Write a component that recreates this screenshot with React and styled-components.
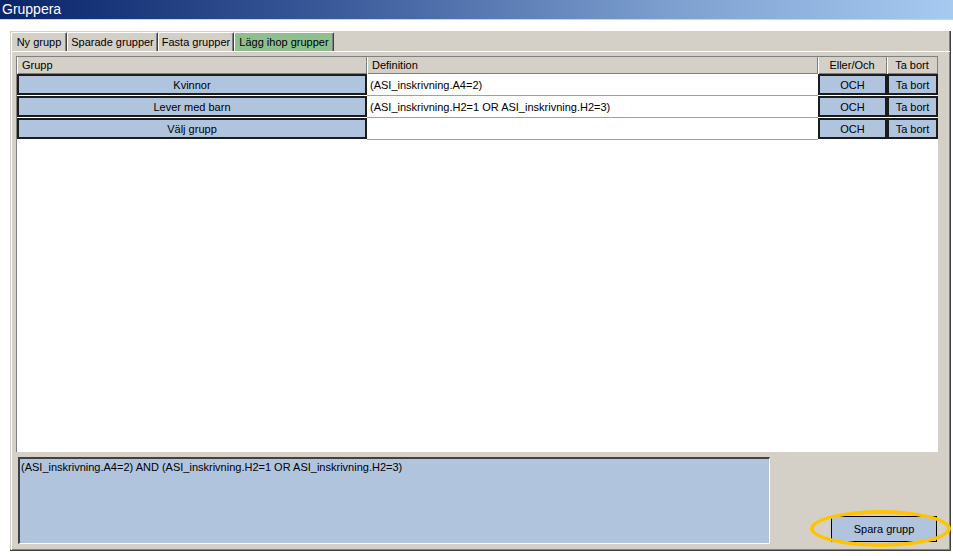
import React from 'react';
import styled, { createGlobalStyle } from 'styled-components';

const GlobalStyle = createGlobalStyle`
  html, body {
    margin: 0;
    padding: 0;
    background: #ffffff;
    font-family: "Liberation Sans", Arial, sans-serif;
    font-size: 11px;
    color: #000;
  }
`;

const COLUMNS = '350px 451px 69px 51px';

const TitleBar = styled.div`
  height: 19px;
  border-bottom: 1px solid #c8d4e4;
  background: linear-gradient(to right, #0a246a 0%, #3a5a9a 35%, #7c9fcf 70%, #a6caf0 100%);
  color: #ffffff;
  font-size: 14px;
  line-height: 19px;
  padding-left: 2px;
`;

const Frame = styled.div`
  margin: 11px 0 0 10px;
  width: 941px;
  height: 520px;
  box-sizing: border-box;
  background: #d4d0c8;
  border-right: 1px solid #404040;
  border-bottom: 1px solid #404040;
  box-shadow: inset -1px -1px 0 #808080;
  display: flex;
  flex-direction: column;
  padding: 1px 0 0 1px;
`;

const TabStrip = styled.div`
  display: flex;
  height: 19px;
`;

const Tab = styled.div`
  width: ${({ $w }) => $w}px;
  box-sizing: border-box;
  background: ${({ $active }) => ($active ? '#8fbf8f' : '#d4d0c8')};
  border-top: 1px solid #ffffff;
  border-left: 1px solid #ffffff;
  border-right: 1px solid #404040;
  box-shadow: inset -1px 0 0 #808080;
  border-radius: 2px 2px 0 0;
  text-align: center;
  line-height: 18px;
  font-size: 11px;
  white-space: nowrap;
`;

const TabPanel = styled.div`
  flex: 1;
  display: flex;
  flex-direction: column;
  border-top: 1px solid #ffffff;
  border-left: 1px solid #ffffff;
  padding: 4px 0 0 4px;
`;

const Grid = styled.div`
  width: 922px;
  height: 396px;
  box-sizing: border-box;
  background: #ffffff;
  border-top: 1px solid #808080;
  border-left: 1px solid #808080;
`;

const HeaderRow = styled.div`
  display: grid;
  grid-template-columns: ${COLUMNS};
  height: 17px;
  background: #d4d0c8;
  border-bottom: 1px solid #808080;
  box-sizing: border-box;
`;

const HeaderCell = styled.div`
  padding-left: ${({ $center }) => ($center ? 0 : 5)}px;
  text-align: ${({ $center }) => ($center ? 'center' : 'left')};
  line-height: 17px;
  border-right: 1px solid #808080;
  box-shadow: inset 1px 0 0 #ffffff;
`;

const Row = styled.div`
  display: grid;
  grid-template-columns: ${COLUMNS};
  height: 22px;
`;

const ButtonCell = styled.div`
  box-sizing: border-box;
  height: 21px;
  background: #b0c4de;
  border: 2px solid #1c1c1c;
  text-align: center;
  line-height: 18px;
`;

const DefCell = styled.div`
  box-sizing: border-box;
  height: 22px;
  padding-left: 3px;
  line-height: 22px;
  border-bottom: 1px solid #a0a0a0;
  white-space: nowrap;
`;

const BottomArea = styled.div`
  flex: 1;
  display: flex;
  align-items: flex-start;
  padding: 5px 0 0 2px;
`;

const Summary = styled.div`
  width: 752px;
  height: 87px;
  box-sizing: border-box;
  background: #b0c4de;
  border-top: 2px solid #404040;
  border-left: 2px solid #404040;
  border-right: 1px solid #ffffff;
  border-bottom: 1px solid #ffffff;
  padding: 2px 1px;
  line-height: 13px;
`;

const SaveWrap = styled.div`
  position: relative;
  margin: 59px 0 0 61px;
`;

const SaveButton = styled.div`
  width: 106px;
  height: 26px;
  box-sizing: border-box;
  background: #b0c4de;
  border: 1px solid #000;
  text-align: center;
  line-height: 24px;
`;

const Highlight = styled.div`
  position: absolute;
  left: -21px;
  top: -6px;
  width: 141px;
  height: 37px;
  box-sizing: border-box;
  border: 4px solid #ffc400;
  border-radius: 50%;
  pointer-events: none;
`;

const tabs = [
  { label: 'Ny grupp', w: 56 },
  { label: 'Sparade grupper', w: 91 },
  { label: 'Fasta grupper', w: 76 },
  { label: 'Lägg ihop grupper', w: 100, active: true },
];

const rows = [
  { group: 'Kvinnor', def: '(ASI_inskrivning.A4=2)' },
  { group: 'Lever med barn', def: '(ASI_inskrivning.H2=1 OR ASI_inskrivning.H2=3)' },
  { group: 'Välj grupp', def: '' },
];

export default function App() {
  return (
    <>
      <GlobalStyle />
      <TitleBar>Gruppera</TitleBar>
      <Frame>
        <TabStrip>
          {tabs.map(t => (
            <Tab key={t.label} $w={t.w} $active={t.active}>
              {t.label}
            </Tab>
          ))}
        </TabStrip>
        <TabPanel>
          <Grid>
            <HeaderRow>
              <HeaderCell>Grupp</HeaderCell>
              <HeaderCell>Definition</HeaderCell>
              <HeaderCell $center>Eller/Och</HeaderCell>
              <HeaderCell $center>Ta bort</HeaderCell>
            </HeaderRow>
            {rows.map(r => (
              <Row key={r.group}>
                <ButtonCell>{r.group}</ButtonCell>
                <DefCell>{r.def}</DefCell>
                <ButtonCell>OCH</ButtonCell>
                <ButtonCell>Ta bort</ButtonCell>
              </Row>
            ))}
          </Grid>
          <BottomArea>
            <Summary>(ASI_inskrivning.A4=2) AND (ASI_inskrivning.H2=1 OR ASI_inskrivning.H2=3)</Summary>
            <SaveWrap>
              <SaveButton>Spara grupp</SaveButton>
              <Highlight />
            </SaveWrap>
          </BottomArea>
        </TabPanel>
      </Frame>
    </>
  );
}
